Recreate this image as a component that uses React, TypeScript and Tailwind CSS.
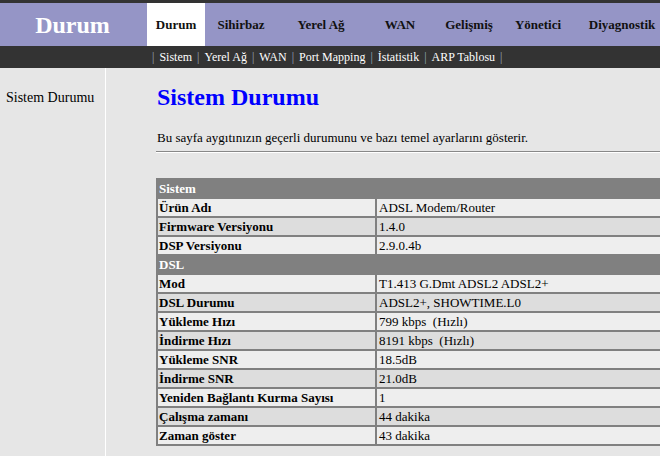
import React from "react";

const tabs: { label: string; w: string; active?: boolean }[] = [
  { label: "Durum", w: "w-[58px]", active: true },
  { label: "Sihirbaz", w: "w-[72px]" },
  { label: "Yerel Ağ", w: "w-[88px]" },
  { label: "WAN", w: "w-[70px]" },
  { label: "Gelişmiş", w: "w-[68px]" },
  { label: "Yönetici", w: "w-[70px]" },
  { label: "Diyagnostik", w: "w-[98px]" },
];

const subLinks = ["Sistem", "Yerel Ağ", "WAN", "Port Mapping", "İstatistik", "ARP Tablosu"];

type Row = { type: "head"; label: string } | { type: "row"; label: string; value: string };

const rows: Row[] = [
  { type: "head", label: "Sistem" },
  { type: "row", label: "Ürün Adı", value: "ADSL Modem/Router" },
  { type: "row", label: "Firmware Versiyonu", value: "1.4.0" },
  { type: "row", label: "DSP Versiyonu", value: "2.9.0.4b" },
  { type: "head", label: "DSL" },
  { type: "row", label: "Mod", value: "T1.413 G.Dmt ADSL2 ADSL2+" },
  { type: "row", label: "DSL Durumu", value: "ADSL2+, SHOWTIME.L0" },
  { type: "row", label: "Yükleme Hızı", value: "799 kbps  (Hızlı)" },
  { type: "row", label: "İndirme Hızı", value: "8191 kbps  (Hızlı)" },
  { type: "row", label: "Yükleme SNR", value: "18.5dB" },
  { type: "row", label: "İndirme SNR", value: "21.0dB" },
  { type: "row", label: "Yeniden Bağlantı Kurma Sayısı", value: "1" },
  { type: "row", label: "Çalışma zamanı", value: "44 dakika" },
  { type: "row", label: "Zaman göster", value: "43 dakika" },
];

export default function App() {
  let idx = 0;
  return (
    <div
      className="w-[660px] h-[456px] overflow-hidden bg-[#e6e6e6] text-black flex flex-col"
      style={{ fontFamily: '"Liberation Serif", "Times New Roman", serif' }}
    >
      <div className="h-[3px] bg-[#333333] shrink-0" />
      <div className="h-[43px] bg-[#9595c6] flex shrink-0 whitespace-nowrap">
        <div className="w-[145px] shrink-0 flex items-center justify-center text-white font-bold text-[24px]">
          Durum
        </div>
        <div className="w-[2px] shrink-0" />
        {tabs.map((t) => (
          <div
            key={t.label}
            className={`${t.w} shrink-0 flex items-center justify-center text-[13px] font-bold text-[#111] ${
              t.active ? "bg-white" : ""
            }`}
          >
            {t.label}
          </div>
        ))}
      </div>
      <div className="h-[22px] bg-[#333333] shrink-0 flex items-center pl-[152px] text-[12px] text-white whitespace-pre">
        <span className="text-[#9ab]">|</span>
        {subLinks.map((l) => (
          <React.Fragment key={l}>
            <span className="px-[5px]">{l}</span>
            <span className="text-[#9ab]">|</span>
          </React.Fragment>
        ))}
      </div>
      <div className="flex flex-1 min-h-0">
        <div className="w-[106px] shrink-0 border-r border-white pl-[6px] pt-[22px]">
          <div className="text-[14px] leading-[16px] whitespace-nowrap">Sistem Durumu</div>
        </div>
        <div className="pl-[50px] w-[620px] shrink-0">
          <h1 className="mt-[15px] text-[24px] leading-[28px] font-bold text-[#0000ff] pl-[1px]">
            Sistem Durumu
          </h1>
          <p className="mt-[19px] text-[13px] leading-[16px] pl-[1px] whitespace-nowrap">
            Bu sayfa aygıtınızın geçerli durumunu ve bazı temel ayarlarını gösterir.
          </p>
          <div className="mt-[5px] border-t border-[#888888] border-b border-b-white" />
          <div className="mt-[25px] bg-[#808080] p-[2px] flex flex-col gap-[2px]">
            {rows.map((r) => {
              if (r.type === "head") {
                idx = 0;
                return (
                  <div
                    key={r.label}
                    className="h-[17px] leading-[17px] text-[13px] font-bold text-white pl-[1px]"
                  >
                    {r.label}
                  </div>
                );
              }
              const bg = idx % 2 === 0 ? "bg-[#eeeeee]" : "bg-[#dddddd]";
              idx++;
              return (
                <div key={r.label} className="grid grid-cols-[217px_1fr] gap-[2px] h-[17px]">
                  <div className={`${bg} text-[13px] leading-[17px] font-bold pl-[1px] whitespace-nowrap`}>
                    {r.label}
                  </div>
                  <div className={`${bg} text-[13px] leading-[17px] pl-[2px] whitespace-pre`}>
                    {r.value}
                  </div>
                </div>
              );
            })}
          </div>
        </div>
      </div>
    </div>
  );
}
